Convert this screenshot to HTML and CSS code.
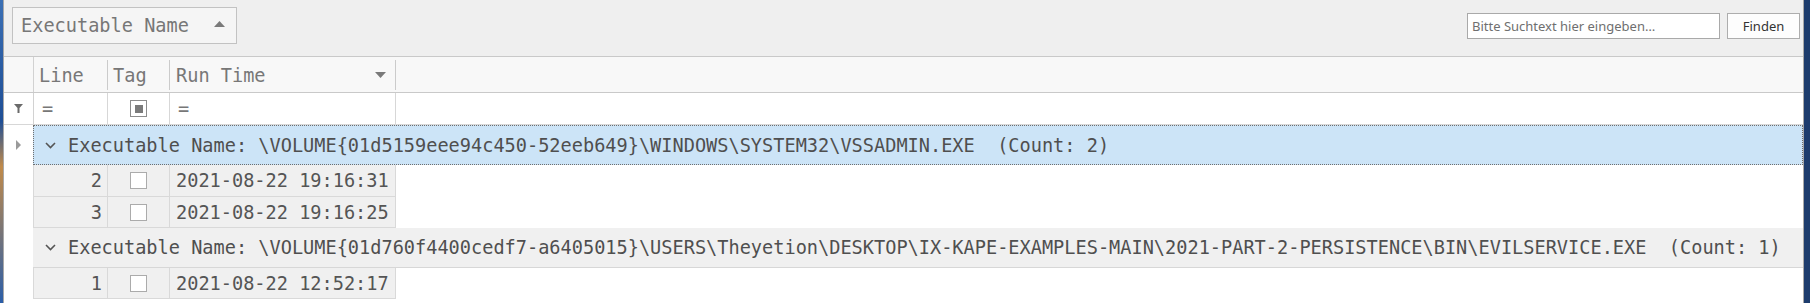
FILE: index.html
```html
<!DOCTYPE html>
<html lang="de">
<head>
  <meta charset="utf-8" />
  <title>Executable Grid</title>
  <link rel="stylesheet" href="styles.css">
</head>
<body>
  <div class="desk"></div>

  <div class="app">
    <!-- Group panel -->
    <div class="group-panel">
      <div class="group-chip">
        <span>Executable Name</span>
        <svg class="chip-arrow" width="11" height="6" viewBox="0 0 11 6"><polygon points="0,6 5.5,0 11,6" fill="#7a7a7a"/></svg>
      </div>
      <div class="search">
        <input type="text" class="search-box" placeholder="Bitte Suchtext hier eingeben…">
        <button type="button" class="search-btn">Finden</button>
      </div>
    </div>

    <!-- Column headers -->
    <div class="row header-row">
      <div class="ind"></div>
      <div class="cell col-line"><span class="hd">Line</span></div>
      <div class="cell col-tag"><span class="hd">Tag</span></div>
      <div class="cell col-run">
        <span class="hd">Run Time</span>
        <svg class="sort-arrow" width="11" height="6" viewBox="0 0 11 6"><polygon points="0,0 11,0 5.5,6" fill="#7a7a7a"/></svg>
      </div>
      <div class="rest"></div>
    </div>

    <!-- Filter row -->
    <div class="row filter-row">
      <div class="ind">
        <svg width="9" height="9" viewBox="0 0 9 9"><polygon points="0,0 9,0 5.5,4 5.5,9 3.5,9 3.5,4" fill="#6a6a6a"/></svg>
      </div>
      <div class="cell col-line eq">=</div>
      <div class="cell col-tag center"><span class="check check-mixed"><span></span></span></div>
      <div class="cell col-run eq">=</div>
    </div>

    <!-- Group 1 -->
    <div class="row group-wrap">
      <div class="ind plain">
        <svg width="5" height="10" viewBox="0 0 5 10"><polygon points="0,0 5,5 0,10" fill="#9a9a9a"/></svg>
      </div>
      <div class="group-row focused">
        <svg class="chev" width="11" height="7" viewBox="0 0 11 7"><polyline points="1,1 5.5,5.5 10,1" fill="none" stroke="#555" stroke-width="1.6"/></svg>
        <span>Executable Name: \VOLUME{01d5159eee94c450-52eeb649}\WINDOWS\SYSTEM32\VSSADMIN.EXE  (Count: 2)</span>
      </div>
    </div>
    <div class="row data-row tall">
      <div class="ind plain"></div>
      <div class="cell col-line num">2</div>
      <div class="cell col-tag center"><span class="check"></span></div>
      <div class="cell col-run">2021-08-22 19:16:31</div>
    </div>
    <div class="row data-row">
      <div class="ind plain"></div>
      <div class="cell col-line num">3</div>
      <div class="cell col-tag center"><span class="check"></span></div>
      <div class="cell col-run">2021-08-22 19:16:25</div>
    </div>

    <!-- Group 2 -->
    <div class="row group-wrap">
      <div class="ind plain"></div>
      <div class="group-row">
        <svg class="chev" width="11" height="7" viewBox="0 0 11 7"><polyline points="1,1 5.5,5.5 10,1" fill="none" stroke="#555" stroke-width="1.6"/></svg>
        <span>Executable Name: \VOLUME{01d760f4400cedf7-a6405015}\USERS\Theyetion\DESKTOP\IX-KAPE-EXAMPLES-MAIN\2021-PART-2-PERSISTENCE\BIN\EVILSERVICE.EXE  (Count: 1)</span>
      </div>
    </div>
    <div class="row data-row">
      <div class="ind plain"></div>
      <div class="cell col-line num">1</div>
      <div class="cell col-tag center"><span class="check"></span></div>
      <div class="cell col-run">2021-08-22 12:52:17</div>
    </div>
  </div>

  <div class="edge"></div>
</body>
</html>
```

FILE: styles.css
```css
html, body {
  margin: 0;
  height: 303px;
  overflow: hidden;
}
body {
  display: flex;
  background-color: #fff;
  font-family: "DejaVu Sans Mono", "Liberation Mono", monospace;
  font-size: 18.6px;
  color: #555;
}
.desk {
  width: 3px;
  background: linear-gradient(#3b6fb4, #1f4f96 40%, #c08a4a 55%, #2b5ea8);
}
.edge {
  width: 6px;
  background-color: #1d3c6d;
}
.app {
  flex: 1;
  display: flex;
  flex-direction: column;
  border-left: 1px solid #a8a8a8;
  border-right: 1px solid #a8a8a8;
  background-color: #fff;
}

/* group panel */
.group-panel {
  flex: none;
  display: flex;
  justify-content: space-between;
  align-items: flex-start;
  padding: 7px 3px 0 8px;
  box-sizing: border-box;
  height: 57px;
  background-color: #efefef;
  border-bottom: 1px solid #c9c9c9;
}
.group-chip {
  width: 225px;
  height: 37px;
  box-sizing: border-box;
  display: flex;
  align-items: center;
  justify-content: space-between;
  padding: 0 11px 0 8px;
  background-color: #f5f5f5;
  border: 1px solid #c2c2c2;
  color: #777;
}
.chip-arrow {
  margin-top: -3px;
}
.search {
  display: flex;
  gap: 7px;
  margin-top: 6px;
}
.search-box {
  width: 253px;
  height: 26px;
  box-sizing: border-box;
  margin: 0;
  padding: 0 4px;
  border: 1px solid #a9a9a9;
  background-color: #fff;
  font-family: "Noto Sans", sans-serif;
  font-size: 13px;
  outline: none;
}
.search-box::placeholder {
  color: #6f6f6f;
}
.search-btn {
  width: 73px;
  height: 26px;
  margin: 0;
  padding: 0;
  border: 1px solid #adadad;
  background-color: #fdfdfd;
  font-family: "Noto Sans", sans-serif;
  font-size: 13px;
  color: #333;
}

/* grid rows */
.row {
  display: flex;
  flex: none;
  box-sizing: border-box;
}
.ind {
  width: 30px;
  flex: none;
  box-sizing: border-box;
  border-right: 1px solid #d2d2d2;
  display: flex;
  align-items: center;
  justify-content: center;
}
.ind.plain {
  border-right: none;
  width: 29px;
  justify-content: flex-start;
  padding-left: 12px;
}
.cell {
  box-sizing: border-box;
  display: flex;
  align-items: center;
  white-space: pre;
  border-right: 1px solid #d7d7d7;
}
.col-line { width: 74px; padding-left: 5px; }
.col-tag { width: 62px; padding-left: 5px; }
.col-run { width: 226px; padding-left: 6px; }
.center { justify-content: center; padding-left: 0; }
.num { justify-content: flex-end; padding: 0 5px 0 0; }

.header-row {
  height: 36px;
  background-color: #f8f8f8;
  border-bottom: 1px solid #c9c9c9;
  color: #777;
}
.header-row .cell {
  border-right-color: #cbcbcb;
  margin: 3px 0 2px;
}
.header-row .col-run {
  justify-content: space-between;
  padding-right: 9px;
}
.rest {
  flex: 1;
}

.filter-row {
  height: 32px;
  border-bottom: 1px solid #d7d7d7;
  color: #777;
}
.eq { padding-left: 8px; }

.check {
  width: 17px;
  height: 17px;
  box-sizing: border-box;
  border: 1px solid #ababab;
  background-color: #fff;
  display: flex;
  align-items: center;
  justify-content: center;
}
.check-mixed {
  border-color: #8c8c8c;
}
.check-mixed span {
  width: 8px;
  height: 8px;
  background-color: #7a7a7a;
}

/* group rows */
.group-wrap {
  height: 40px;
}
.group-row {
  flex: 1;
  display: flex;
  align-items: center;
  gap: 12px;
  padding-left: 12px;
  white-space: pre;
  color: #4f4f4f;
  background-color: #f0f0f0;
  border-bottom: 1px solid #d7d7d7;
}
.group-row.focused {
  background-color: #cce4f7;
  border: 1px dotted #6f6f6f;
  padding-left: 11px;
}

/* data rows */
.data-row {
  height: 31px;
}
.data-row.tall {
  height: 32px;
}
.data-row .cell {
  background-color: #f0f0f0;
  border-bottom: 1px solid #d9d9d9;
  border-right-color: #d9d9d9;
  color: #555;
}
.data-row .col-line {
  width: 75px;
  border-left: 1px solid #d9d9d9;
}
```
